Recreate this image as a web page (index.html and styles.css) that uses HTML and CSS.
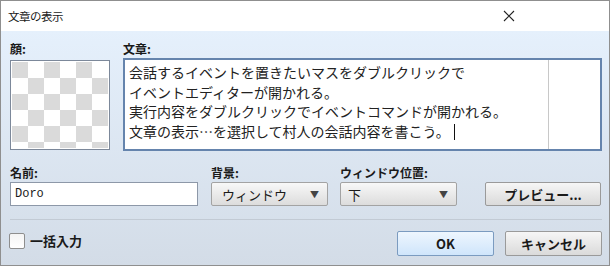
FILE: index.html
```html
<!DOCTYPE html>
<html>
<head>
    <title>文章の表示</title>
    <link rel="stylesheet" href="styles.css">
</head>
<body>
    <div class="window">
        <div class="titlebar">
            <span class="title">文章の表示</span>
            <svg class="close" width="12" height="12" viewBox="0 0 12 12">
                <path d="M1 1 L11 11 M11 1 L1 11" stroke="#222" stroke-width="1.1" fill="none"/>
            </svg>
        </div>

        <div class="content">
            <div class="top-row">
                <div class="face-col">
                    <div class="label">顔:</div>
                    <div class="face-box"><div class="checker"></div></div>
                </div>
                <div class="text-col">
                    <div class="label">文章:</div>
                    <div class="text-area">
                        <div class="text-lines">
                            会話するイベントを置きたいマスをダブルクリックで<br>
                            イベントエディターが開かれる。<br>
                            実行内容をダブルクリックでイベントコマンドが開かれる。<br>
                            文章の表示…を選択して村人の会話内容を書こう。<span class="caret"></span>
                        </div>
                        <div class="scroll-area"></div>
                    </div>
                </div>
            </div>

            <div class="field-row">
                <div class="field name-field">
                    <div class="label">名前:</div>
                    <div class="text-input">Doro</div>
                </div>
                <div class="field bg-field">
                    <div class="label">背景:</div>
                    <div class="select"><span>ウィンドウ</span><span class="arrow">▼</span></div>
                </div>
                <div class="field pos-field">
                    <div class="label">ウィンドウ位置:</div>
                    <div class="select"><span>下</span><span class="arrow">▼</span></div>
                </div>
                <div class="button preview-button">プレビュー...</div>
            </div>

            <div class="separator"></div>

            <div class="bottom-row">
                <label class="check">
                    <span class="check-box"></span>
                    <span class="check-text">一括入力</span>
                </label>
                <div class="buttons">
                    <div class="button ok-button">OK</div>
                    <div class="button">キャンセル</div>
                </div>
            </div>
        </div>
    </div>
</body>
</html>
```

FILE: styles.css
```css
body {
    margin: 0;
    background: #fff;
    font-family: "Noto Sans CJK JP", sans-serif;
    color: #1a1a1a;
}

.window {
    width: 610px;
    height: 266px;
    box-sizing: border-box;
    border: 1px solid #8f8f8f;
    display: flex;
    flex-direction: column;
}

.titlebar {
    height: 30px;
    flex: none;
    background: #fff;
    display: flex;
    align-items: center;
    justify-content: space-between;
    padding: 0 0 0 7px;
}

.title {
    font-size: 11.5px;
    letter-spacing: -0.5px;
}

.close {
    margin-right: 94px;
}

.content {
    flex: 1;
    background: linear-gradient(#e5f0fc, #d3dce7);
    padding: 11px 7px 0 9px;
}

.label {
    font-size: 12px;
    font-weight: bold;
    line-height: 13px;
    height: 13px;
}

.top-row {
    display: flex;
    gap: 12px;
}

.face-col {
    width: 101px;
}

.face-box {
    margin-top: 5px;
    width: 100px;
    height: 90px;
    box-sizing: border-box;
    border: 1px solid #7c889a;
    padding: 1px;
    background: #fff;
}

.checker {
    width: 96px;
    height: 86px;
    background: conic-gradient(#fff 25%, #dadada 0 50%, #fff 0 75%, #dadada 0);
    background-size: 32px 32px;
}

.text-area {
    margin-top: 3px;
    width: 479px;
    height: 93px;
    box-sizing: border-box;
    border: 2px solid #6584ad;
    background: #fff;
    display: flex;
}

.text-lines {
    flex: 1;
    padding: 3px 0 0 4px;
    font-size: 14px;
    line-height: 19.5px;
    color: #222;
}

.caret {
    display: inline-block;
    width: 1px;
    height: 16px;
    background: #111;
    margin-left: 4px;
    vertical-align: -3px;
}

.scroll-area {
    width: 51px;
    border-left: 1px solid #c8c8c8;
}

.field-row {
    margin-top: 15px;
    display: flex;
    align-items: flex-end;
}

.name-field {
    width: 188px;
}

.bg-field {
    margin-left: 13px;
    width: 117px;
}

.pos-field {
    margin-left: 12px;
    width: 117px;
}

.text-input,
.select {
    margin-top: 3px;
    height: 24px;
    box-sizing: border-box;
}

.text-input {
    border: 1px solid #8d98a8;
    background: #fff;
    font-family: "Liberation Mono", monospace;
    font-size: 12px;
    line-height: 22px;
    padding-left: 4px;
}

.select {
    border: 1px solid #a3a3a3;
    border-radius: 2px;
    background: linear-gradient(#f8f8f8, #dcdcdc);
    display: flex;
    align-items: center;
    justify-content: space-between;
    padding: 0 8px 0 10px;
    font-size: 13px;
}

.pos-field .select {
    padding-left: 7px;
}

.arrow {
    font-size: 9px;
    color: #444;
}

.button {
    height: 25px;
    box-sizing: border-box;
    border: 1px solid #9a9a9a;
    border-radius: 2px;
    background: linear-gradient(#f6f6f6, #dadada);
    display: flex;
    align-items: center;
    justify-content: center;
    font-size: 13px;
    font-weight: bold;
}

.preview-button {
    margin-left: 28px;
    width: 116px;
    height: 24px;
}

.separator {
    margin-top: 13px;
    height: 1px;
    background: #c2cad4;
}

.bottom-row {
    margin-top: 11px;
    display: flex;
    align-items: center;
}

.check {
    display: flex;
    align-items: center;
    gap: 5px;
    margin-left: -1px;
    align-self: flex-start;
}

.check-box {
    width: 16px;
    height: 16px;
    box-sizing: border-box;
    border: 1px solid #8e8e8e;
    border-radius: 2px;
    background: linear-gradient(#f4f4f4, #fff);
}

.check-text {
    font-size: 13px;
    font-weight: bold;
}

.buttons {
    margin-left: auto;
    display: flex;
    gap: 11px;
}

.buttons .button {
    width: 97px;
}

.ok-button {
    border-color: #7b9bc0;
    background: linear-gradient(#eef6fe, #cfe5fb);
}
```
